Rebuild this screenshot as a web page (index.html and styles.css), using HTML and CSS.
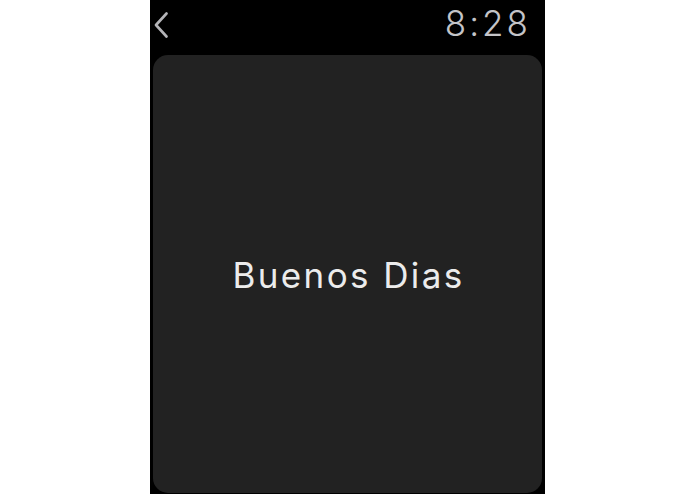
FILE: index.html
```html
<!DOCTYPE html>
<html>
<head>
<meta charset="utf-8">
<link rel="stylesheet" href="styles.css">
</head>
<body>
<div class="watch">
  <div class="status">
    <svg class="back" width="16" height="26" viewBox="0 0 16 26"><path d="M13.5 1.5 L3 13 L13.5 24.5" fill="none" stroke="#b4b4b8" stroke-width="2.6" stroke-linecap="round" stroke-linejoin="round"/></svg>
    <span class="time">8:28</span>
  </div>
  <div class="card">
    <span class="greeting">Buenos Dias</span>
  </div>
</div>
</body>
</html>
```
FILE: styles.css
```css
html, body {
  margin: 0;
  padding: 0;
  background: #fff;
  height: 100%;
}
.watch {
  width: 395px;
  height: 494px;
  margin-left: 150px;
  background: #000;
  display: flex;
  flex-direction: column;
  padding: 0 3px 1px 3px;
  box-sizing: border-box;
}
.status {
  height: 55px;
  display: flex;
  align-items: flex-start;
  justify-content: space-between;
  flex: none;
}
.back {
  margin-top: 12px;
  margin-left: 0;
}
.time {
  font-family: "Inter", sans-serif;
  font-weight: 300;
  font-size: 35px;
  color: #c4c4c8;
  line-height: 1;
  margin-top: 6px;
  margin-right: 11px;
  letter-spacing: 3px;
}
.card {
  flex: 1;
  background: #222222;
  border-radius: 15px;
  display: flex;
  align-items: center;
  justify-content: center;
}
.greeting {
  font-family: "Inter", sans-serif;
  font-size: 35px;
  color: #ececec;
  letter-spacing: 2.4px;
  padding-left: 2px;
  margin-top: 1px;
}
```
